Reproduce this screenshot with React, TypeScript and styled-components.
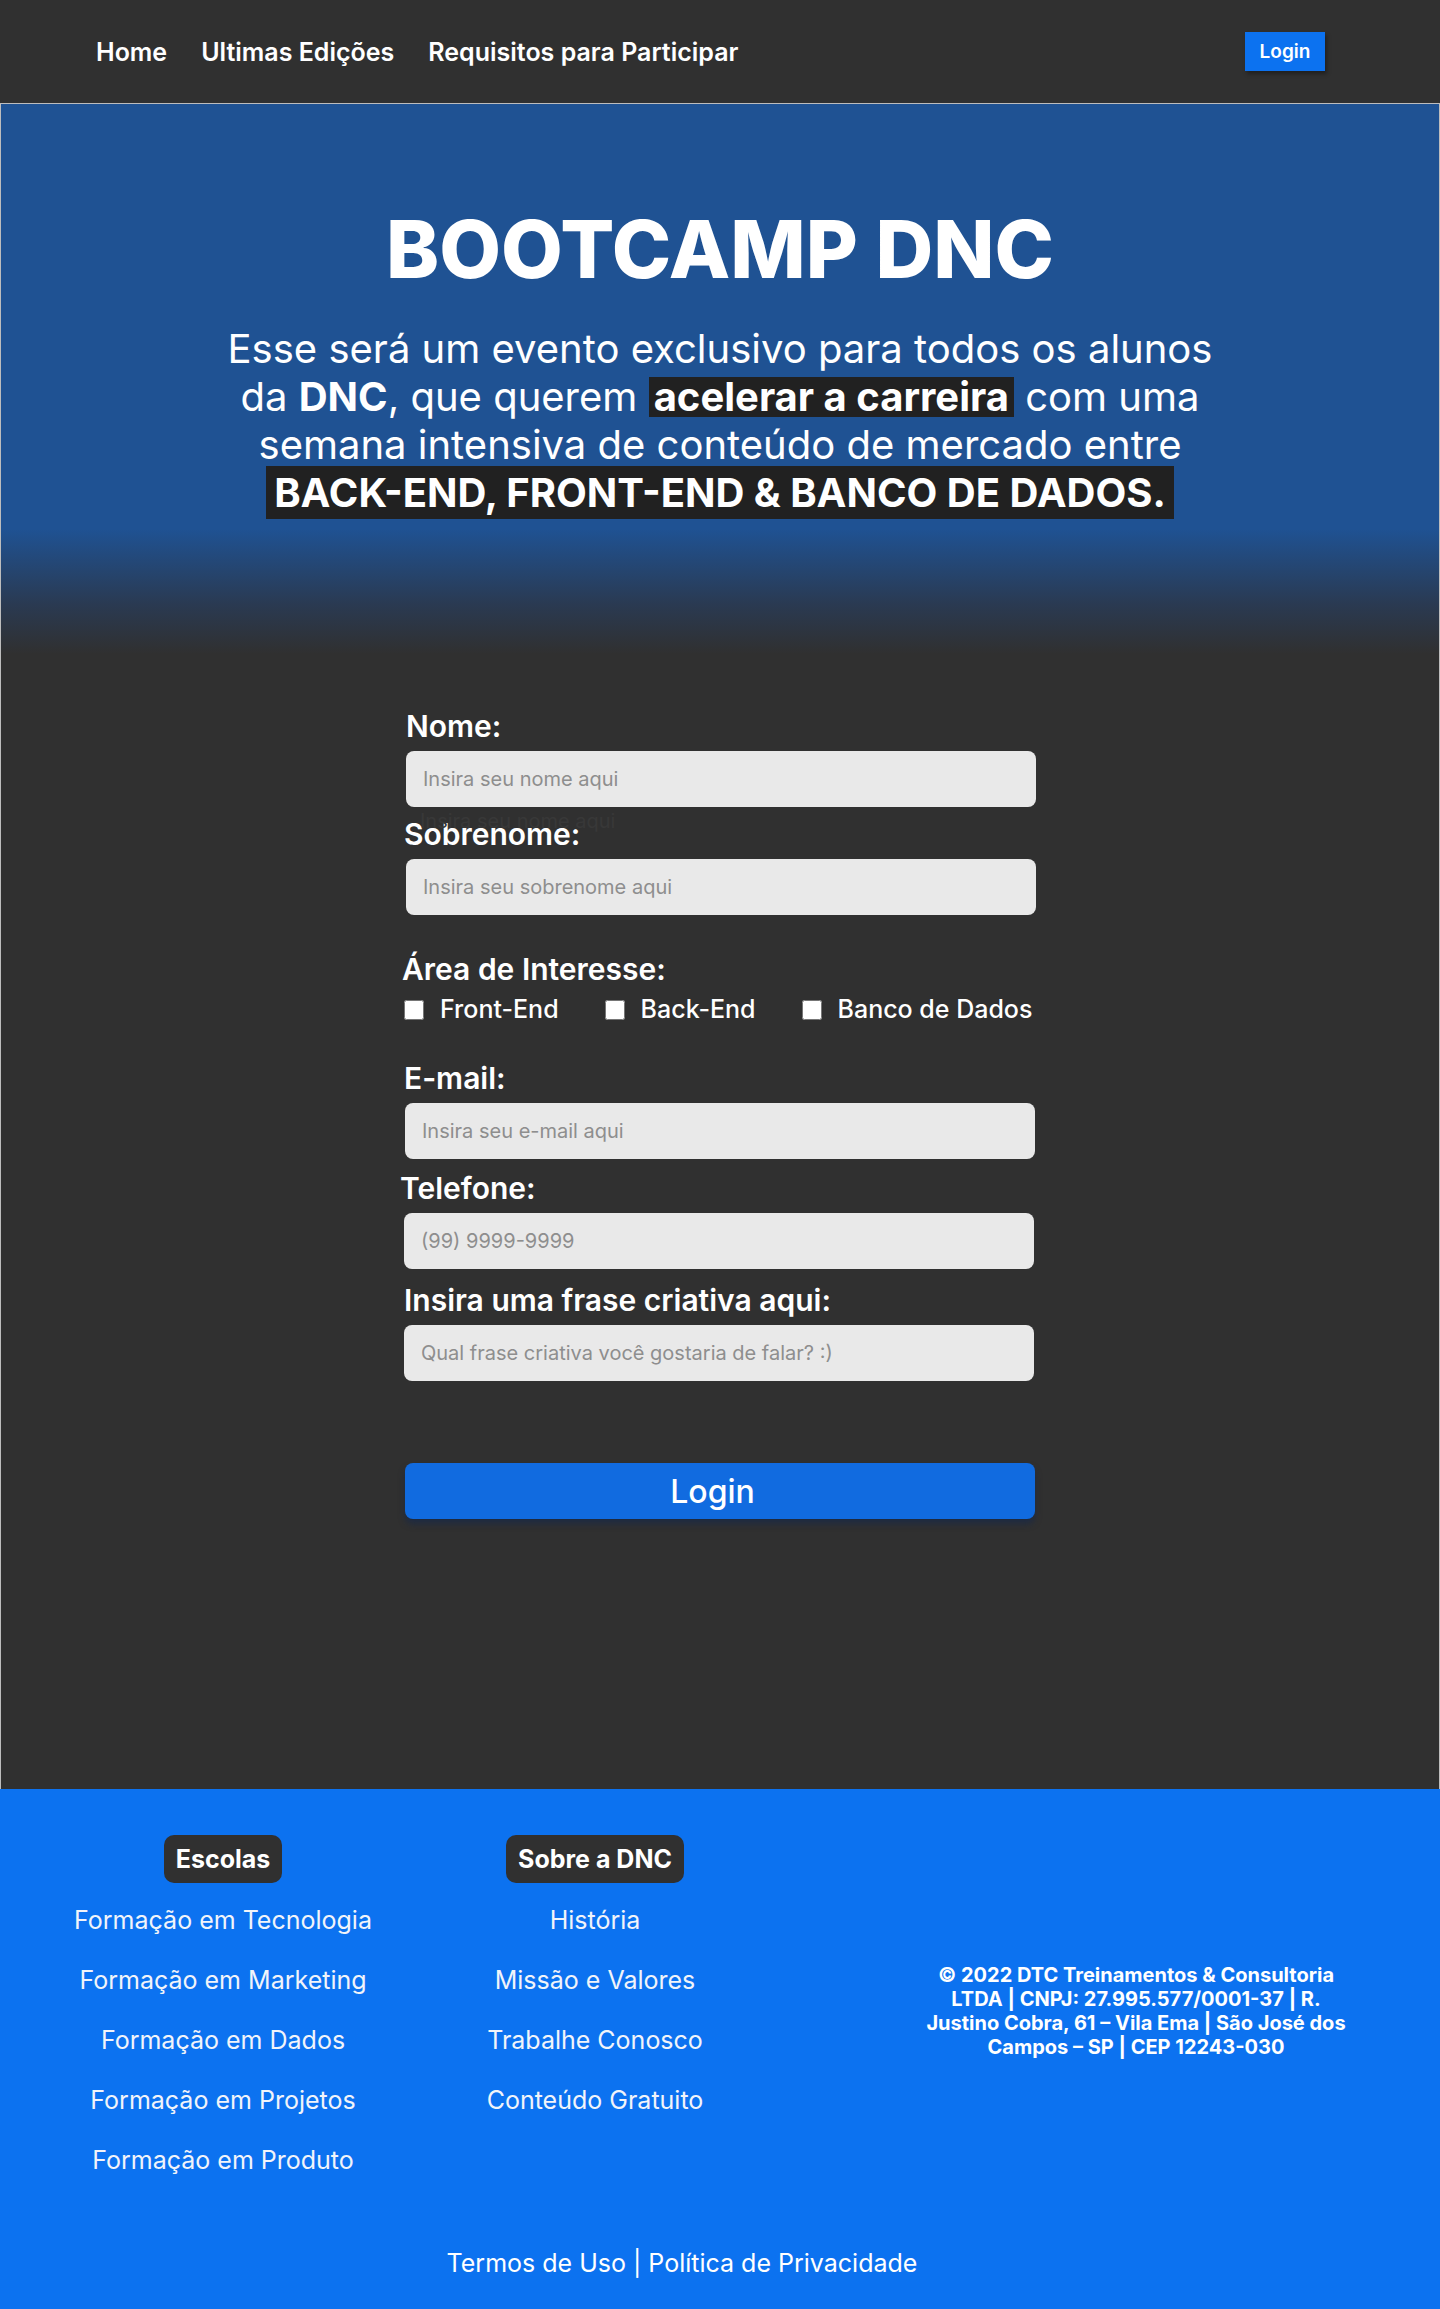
import React from "react";
import styled, { createGlobalStyle } from "styled-components";

const GlobalStyle = createGlobalStyle`
  * { box-sizing: border-box; }
  html, body { margin: 0; padding: 0; }
  body {
    font-family: Inter, "Noto Sans", "Liberation Sans", sans-serif;
    background: #303030;
    color: #ffffff;
  }
`;

const Header = styled.header`
  height: 103px;
  background: #303030;
  display: flex;
  align-items: center;
  justify-content: space-between;
  padding: 0 115px 0 96px;
`;

const Nav = styled.nav`
  display: flex;
  align-items: center;
  gap: 34px;
`;

const NavLink = styled.a`
  color: #ffffff;
  font-size: 25px;
  font-weight: 600;
  text-decoration: none;
  line-height: 30px;
`;

const HeaderButton = styled.button`
  width: 80px;
  height: 39px;
  border: none;
  background: #0c72f0;
  color: #ffffff;
  font-family: inherit;
  font-size: 19px;
  font-weight: 600;
  box-shadow: 2px 3px 4px rgba(0, 0, 0, 0.35);
  padding: 0;
`;

const Main = styled.main`
  height: 1686px;
  border: 1px solid #bdbdbd;
  border-bottom: none;
  background: linear-gradient(180deg, #1f5293 0px, #1f5293 425px, #2a3a52 500px, #303030 550px);
  padding-top: 97px;
  display: flex;
  flex-direction: column;
  align-items: center;
`;

const Title = styled.h1`
  margin: 0;
  font-size: 80px;
  line-height: 96px;
  font-weight: 800;
  text-align: center;
`;

const Lead = styled.p`
  margin: 28px 0 0;
  font-size: 40px;
  line-height: 48px;
  font-weight: 400;
  text-align: center;
`;

const Mark = styled.strong`
  display: inline-block;
  line-height: 40px;
  padding: 0 5px;
  background: #212121;
  font-weight: 700;
`;

const BigMark = styled.strong`
  padding: 2px 8px;
  background: #212121;
  font-weight: 700;
`;

const Form = styled.form`
  width: 632px;
  margin-top: 192px;
  display: flex;
  flex-direction: column;
`;

const Label = styled.label<{ $shift?: number; $top?: number }>`
  display: block;
  font-size: 30px;
  line-height: 34px;
  font-weight: 600;
  margin-left: ${(p) => p.$shift ?? 0}px;
  margin-top: ${(p) => p.$top ?? 0}px;
`;

const FieldBox = styled.div<{ $shift?: number }>`
  position: relative;
  margin-top: 8px;
  margin-left: ${(p) => p.$shift ?? 0}px;
`;

const Input = styled.input`
  display: block;
  width: 630px;
  height: 56px;
  border: none;
  border-radius: 8px;
  background: #e9e9e9;
  padding: 0 17px;
  font-family: inherit;
  font-size: 20px;
  color: #333;
  outline: none;
  &::placeholder { color: #8e8e8e; }
`;

const Ghost = styled.span`
  position: absolute;
  left: 14px;
  top: 100%;
  margin-top: 2px;
  font-size: 20px;
  line-height: 24px;
  color: #383838;
  pointer-events: none;
`;

const CheckRow = styled.div`
  display: flex;
  align-items: center;
  gap: 46px;
  margin-top: 9px;
`;

const CheckItem = styled.label`
  display: flex;
  align-items: center;
  gap: 16px;
  font-size: 25px;
  line-height: 29px;
  font-weight: 500;
`;

const Box = styled.input`
  width: 20px;
  height: 20px;
  margin: 0;
  accent-color: #ffffff;
`;

const SubmitButton = styled.button`
  margin-top: 82px;
  margin-left: 1px;
  width: 630px;
  height: 56px;
  border: none;
  border-radius: 8px;
  background: #116be0;
  color: #ffffff;
  font-family: inherit;
  font-size: 32px;
  font-weight: 500;
  box-shadow: 0 5px 6px rgba(16, 38, 80, 0.55);
  padding: 0 15px 0 0;
`;

const Footer = styled.footer`
  background: #0c72f0;
  padding: 46px 0 31px;
`;

const FooterGrid = styled.div`
  display: grid;
  grid-template-columns: 446px 298px 1fr;
`;

const FooterCol = styled.div`
  display: flex;
  flex-direction: column;
  align-items: center;
`;

const Badge = styled.span`
  height: 48px;
  display: flex;
  align-items: center;
  padding: 0 12px;
  background: #303030;
  border-radius: 10px;
  font-size: 25px;
  font-weight: 700;
`;

const LinkList = styled.ul`
  list-style: none;
  margin: 22px 0 0;
  padding: 0;
  display: flex;
  flex-direction: column;
  gap: 30px;
  text-align: center;
`;

const FooterLink = styled.li`
  font-size: 25px;
  line-height: 30px;
  color: #f1f4fa;
`;

const CopyCol = styled.div`
  padding-left: 88px;
  display: flex;
  justify-content: center;
`;

const Copy = styled.p`
  margin: 128px 0 0;
  width: 440px;
  text-align: center;
  font-size: 20px;
  line-height: 24px;
  font-weight: 700;
`;

const Legal = styled.p`
  margin: 73px 0 0;
  padding-right: 76px;
  text-align: center;
  font-size: 25px;
  line-height: 30px;
  color: #ffffff;
`;

export default function App() {
  return (
    <>
      <GlobalStyle />
      <Header>
        <Nav>
          <NavLink>Home</NavLink>
          <NavLink>Ultimas Edições</NavLink>
          <NavLink>Requisitos para Participar</NavLink>
        </Nav>
        <HeaderButton>Login</HeaderButton>
      </Header>
      <Main>
        <Title>BOOTCAMP DNC</Title>
        <Lead>
          Esse será um evento exclusivo para todos os alunos
          <br />
          da <strong>DNC</strong>, que querem <Mark>acelerar a carreira</Mark> com uma
          <br />
          semana intensiva de conteúdo de mercado entre
          <br />
          <BigMark>BACK-END, FRONT-END &amp; BANCO DE DADOS.</BigMark>
        </Lead>
        <Form onSubmit={(e) => e.preventDefault()}>
          <Label $shift={2}>Nome:</Label>
          <FieldBox $shift={2}>
            <Input placeholder="Insira seu nome aqui" />
            <Ghost>Insira seu nome aqui</Ghost>
          </FieldBox>
          <Label $top={10}>Sobrenome:</Label>
          <FieldBox $shift={2}>
            <Input placeholder="Insira seu sobrenome aqui" />
          </FieldBox>
          <Label $top={37} $shift={-2}>Área de Interesse:</Label>
          <CheckRow>
            <CheckItem>
              <Box type="checkbox" />
              Front-End
            </CheckItem>
            <CheckItem>
              <Box type="checkbox" />
              Back-End
            </CheckItem>
            <CheckItem>
              <Box type="checkbox" />
              Banco de Dados
            </CheckItem>
          </CheckRow>
          <Label $top={37}>E-mail:</Label>
          <FieldBox $shift={1}>
            <Input placeholder="Insira seu e-mail aqui" />
          </FieldBox>
          <Label $top={12} $shift={-4}>Telefone:</Label>
          <FieldBox>
            <Input placeholder="(99) 9999-9999" />
          </FieldBox>
          <Label $top={14}>Insira uma frase criativa aqui:</Label>
          <FieldBox>
            <Input placeholder="Qual frase criativa você gostaria de falar? :)" />
          </FieldBox>
          <SubmitButton type="submit">Login</SubmitButton>
        </Form>
      </Main>
      <Footer>
        <FooterGrid>
          <FooterCol>
            <Badge>Escolas</Badge>
            <LinkList>
              <FooterLink>Formação em Tecnologia</FooterLink>
              <FooterLink>Formação em Marketing</FooterLink>
              <FooterLink>Formação em Dados</FooterLink>
              <FooterLink>Formação em Projetos</FooterLink>
              <FooterLink>Formação em Produto</FooterLink>
            </LinkList>
          </FooterCol>
          <FooterCol>
            <Badge>Sobre a DNC</Badge>
            <LinkList>
              <FooterLink>História</FooterLink>
              <FooterLink>Missão e Valores</FooterLink>
              <FooterLink>Trabalhe Conosco</FooterLink>
              <FooterLink>Conteúdo Gratuito</FooterLink>
            </LinkList>
          </FooterCol>
          <CopyCol>
            <Copy>
              © 2022 DTC Treinamentos &amp; Consultoria
              <br />
              LTDA | CNPJ: 27.995.577/0001-37 | R.
              <br />
              Justino Cobra, 61 – Vila Ema | São José dos
              <br />
              Campos – SP | CEP 12243-030
            </Copy>
          </CopyCol>
        </FooterGrid>
        <Legal>Termos de Uso | Política de Privacidade</Legal>
      </Footer>
    </>
  );
}
